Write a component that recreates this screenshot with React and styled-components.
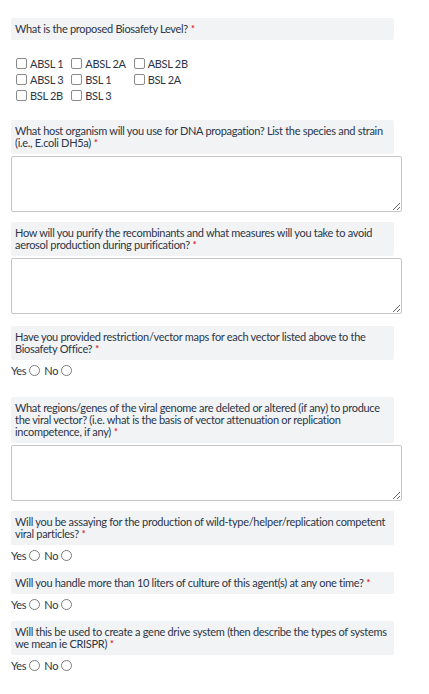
import React from 'react';
import styled, { createGlobalStyle } from 'styled-components';

const GlobalStyle = createGlobalStyle`
  body {
    margin: 0;
    background: #ffffff;
    font-family: Lato, "Open Sans", sans-serif;
    color: #2b3648;
  }
`;

const Form = styled.div`
  width: 391px;
  padding: 18px 0 20px 11px;
`;

const Question = styled.div`
  margin-top: ${(p) => p.gap || 0}px;
`;

const Label = styled.div`
  background: #f2f3f5;
  margin-right: 8px;
  padding: 5px 4px;
  font-size: 11px;
  line-height: 12px;
  letter-spacing: -0.3px;
  border-radius: 2px;
`;

const Required = styled.span`
  color: #e0201a;
  margin-left: 3px;
  font-size: 9px;
  font-weight: bold;
  vertical-align: 1px;
`;

const CheckGrid = styled.div`
  display: grid;
  grid-template-columns: repeat(3, auto);
  justify-content: start;
  grid-auto-rows: 16px;
  padding: 15px 0 0 5px;
`;

const CheckItem = styled.label`
  display: flex;
  align-items: center;
  gap: 3px;
  padding-right: 8px;
  font-size: 11px;
  letter-spacing: -0.3px;
`;

const Box = styled.input`
  appearance: none;
  width: 11px;
  height: 11px;
  margin: 0;
  border: 1px solid #8a8a8a;
  border-radius: 2px;
  background: #fff;
`;

const TextArea = styled.textarea`
  display: block;
  box-sizing: border-box;
  width: 391px;
  height: 56px;
  margin-top: 2px;
  border: 1px solid #c6c6c6;
  border-radius: 2px;
  resize: vertical;
  font-family: inherit;
`;

const RadioRow = styled.div`
  display: flex;
  align-items: center;
  gap: 2px;
  height: 14px;
  margin-top: 3px;
  font-size: 11px;
  letter-spacing: -0.3px;
`;

const RadioLabel = styled.label`
  display: flex;
  align-items: center;
  gap: 3px;
`;

const Radio = styled.input`
  appearance: none;
  width: 11px;
  height: 11px;
  margin: 0 2px 0 0;
  border: 1px solid #7c7c7c;
  border-radius: 50%;
  background: #fff;
`;

const levels = ['ABSL 1', 'ABSL 2A', 'ABSL 2B', 'ABSL 3', 'BSL 1', 'BSL 2A', 'BSL 2B', 'BSL 3'];

const YesNo = ({ name }) => (
  <RadioRow>
    <RadioLabel>Yes <Radio type="radio" name={name} /></RadioLabel>
    <RadioLabel>No <Radio type="radio" name={name} /></RadioLabel>
  </RadioRow>
);

const Ask = ({ children }) => (
  <Label>
    {children}
    <Required>*</Required>
  </Label>
);

export default function App() {
  return (
    <>
      <GlobalStyle />
      <Form>
        <Question>
          <Ask>What is the proposed Biosafety Level?</Ask>
          <CheckGrid>
            {levels.map((l) => (
              <CheckItem key={l}>
                <Box type="checkbox" />
                {l}
              </CheckItem>
            ))}
          </CheckGrid>
        </Question>

        <Question gap={17}>
          <Ask>What host organism will you use for DNA propagation? List the species and strain (i.e., E.coli DH5a)</Ask>
          <TextArea />
        </Question>

        <Question gap={10}>
          <Ask>How will you purify the recombinants and what measures will you take to avoid aerosol production during purification?</Ask>
          <TextArea />
        </Question>

        <Question gap={12}>
          <Ask>Have you provided restriction/vector maps for each vector listed above to the Biosafety Office?</Ask>
          <YesNo name="maps" />
        </Question>

        <Question gap={20}>
          <Ask>What regions/genes of the viral genome are deleted or altered (if any) to produce the viral vector? (i.e. what is the basis of vector attenuation or replication incompetence, if any)</Ask>
          <TextArea />
        </Question>

        <Question gap={10}>
          <Ask>Will you be assaying for the production of wild-type/helper/replication competent viral particles?</Ask>
          <YesNo name="assay" />
        </Question>

        <Question gap={10}>
          <Ask>Will you handle more than 10 liters of culture of this agent(s) at any one time?</Ask>
          <YesNo name="liters" />
        </Question>

        <Question gap={10}>
          <Ask>Will this be used to create a gene drive system (then describe the types of systems we mean ie CRISPR)</Ask>
          <YesNo name="drive" />
        </Question>
      </Form>
    </>
  );
}
